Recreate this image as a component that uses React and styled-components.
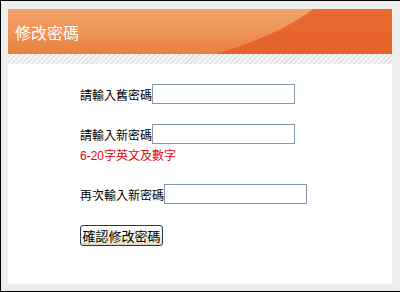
import styled, { createGlobalStyle } from "styled-components";

const GlobalStyle = createGlobalStyle`
  * { box-sizing: border-box; }
  body {
    margin: 0;
    font-family: "Liberation Sans", "Noto Sans CJK TC", sans-serif;
  }
`;

const App = () => {
  return (
    <>
      <GlobalStyle />
      <Frame>
        <Header>
          <Title>修改密碼</Title>
        </Header>
        <Stripes />
        <Panel>
          <Row>
            <Label>請輸入舊密碼</Label>
            <Input type="password" />
          </Row>
          <Row $top={20}>
            <Label>請輸入新密碼</Label>
            <Input type="password" />
          </Row>
          <Hint>6-20字英文及數字</Hint>
          <Row $top={20}>
            <Label>再次輸入新密碼</Label>
            <Input type="password" />
          </Row>
          <Submit type="button">確認修改密碼</Submit>
        </Panel>
      </Frame>
    </>
  );
};

const Frame = styled.div`
  width: 400px;
  height: 292px;
  display: flex;
  flex-direction: column;
  padding: 8px 8px 7px 7px;
  background: #eeeeee;
  border-style: solid;
  border-color: #000;
  border-width: 1px 0 1px 1px;
`;

const Header = styled.div`
  position: relative;
  overflow: hidden;
  height: 45px;
  flex-shrink: 0;
  display: flex;
  align-items: center;
  padding-left: 7px;
  background: linear-gradient(#e96b31, #e5612a);

  &::before {
    content: "";
    position: absolute;
    left: -343px;
    top: -192px;
    width: 686px;
    height: 264px;
    border-radius: 50%;
    background: linear-gradient(180deg, #f3a46e 72%, #ee9257 82%, #e87f3e 90%, #e67a3a 100%);
  }
`;

const Title = styled.h1`
  position: relative;
  margin: 0;
  font-size: 16px;
  font-weight: normal;
  color: #fff;
  font-family: "Noto Sans CJK TC", sans-serif;
`;

const Stripes = styled.div`
  height: 10px;
  flex-shrink: 0;
  background: repeating-linear-gradient(135deg, #f7f7f7 0 2px, #e2e2e2 2px 3.5px);
`;

const Panel = styled.div`
  flex: 1;
  background: #fff;
  padding: 20px 0 0 72px;
  display: flex;
  flex-direction: column;
  align-items: flex-start;
`;

const Row = styled.div`
  display: flex;
  align-items: center;
  margin-top: ${(p) => p.$top || 0}px;
`;

const Label = styled.span`
  font-size: 12px;
  color: #000;
  font-family: "Noto Sans CJK TC", sans-serif;
`;

const Input = styled.input`
  width: 143px;
  height: 20px;
  margin: 0;
  border: 1px solid #8399ad;
  padding: 1px 3px;
  background: #fff;
  outline: none;
`;

const Hint = styled.div`
  margin-top: 4px;
  font-size: 12px;
  color: #e8000c;
  line-height: 16px;
  font-family: "Liberation Sans", "Noto Sans CJK TC", sans-serif;
`;

const Submit = styled.button`
  margin-top: 21px;
  width: 83px;
  height: 21px;
  padding: 0;
  font-size: 13px;
  line-height: 17px;
  color: #000;
  font-family: "Noto Sans CJK TC", sans-serif;
  border: 1px solid #1c3b57;
  border-radius: 3px;
  background: linear-gradient(#ffffff, #ece9d8 85%, #d6d0c0);
`;

export default App;
